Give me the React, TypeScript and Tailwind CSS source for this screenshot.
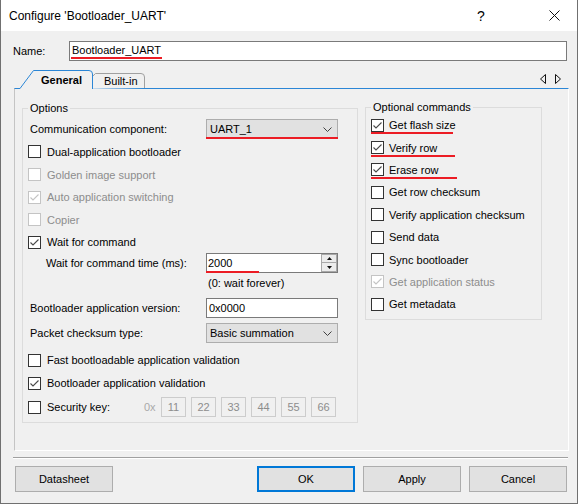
import React from "react";

type CheckProps = { checked?: boolean; disabled?: boolean };

function CheckBox({ checked = false, disabled = false }: CheckProps) {
  return (
    <span
      className={`w-[13px] h-[13px] shrink-0 border bg-white flex items-center justify-center ${
        disabled ? "border-[#c4c4c4]" : "border-[#333333]"
      }`}
    >
      {checked && (
        <svg width="11" height="11" viewBox="0 0 11 11" className="block">
          <polyline
            points="1.5,5.5 4,8 9.5,2.5"
            fill="none"
            stroke={disabled ? "#c4c4c4" : "#4a4a4a"}
            strokeWidth="1.1"
          />
        </svg>
      )}
    </span>
  );
}

type RowProps = {
  label: string;
  checked?: boolean;
  disabled?: boolean;
  className?: string;
  underline?: number;
};

function CheckRow({ label, checked = false, disabled = false, className = "", underline }: RowProps) {
  return (
    <div className={`relative flex items-center ${className}`}>
      <CheckBox checked={checked} disabled={disabled} />
      <span className={disabled ? "text-[#8d8d8d]" : "text-black"}>{label}</span>
      {underline ? (
        <span
          className="absolute left-0 top-[calc(50%+7px)] h-[2px] bg-[#ec1c24]"
          style={{ width: underline }}
        />
      ) : null}
    </div>
  );
}

function Chevron() {
  return (
    <svg width="9" height="5" viewBox="0 0 9 5" className="block">
      <polyline points="0.5,0.5 4.5,4.5 8.5,0.5" fill="none" stroke="#404040" strokeWidth="1" />
    </svg>
  );
}

function Combo({ text, underline = false }: { text: string; underline?: boolean }) {
  return (
    <div className="relative w-[132px] h-[20px] bg-[#e1e1e1] border border-[#adadad] flex items-center pl-[3px] pr-[5px]">
      <span className="flex-1">{text}</span>
      <Chevron />
      {underline && (
        <span className="absolute left-[-1px] right-[-1px] bottom-[-1px] h-[2px] bg-[#ec1c24]" />
      )}
    </div>
  );
}

function Spin() {
  return (
    <div className="relative w-[132px] h-[20px] bg-white border border-[#7a7a7a] flex items-stretch">
      <span className="flex-1 flex items-center pl-[1px]">2000</span>
      <div className="w-[16px] flex flex-col">
        <div className="h-[9px] bg-[#ececec] border border-[#a8a8a8] flex items-center justify-center">
          <svg width="5" height="3" viewBox="0 0 5 3" className="block">
            <polygon points="0,3 2.5,0 5,3" fill="#111" />
          </svg>
        </div>
        <div className="h-[9px] bg-[#ececec] border border-[#a8a8a8] border-t-0 flex items-center justify-center">
          <svg width="5" height="3" viewBox="0 0 5 3" className="block">
            <polygon points="0,0 2.5,3 5,0" fill="#111" />
          </svg>
        </div>
      </div>
      <span className="absolute left-[-1px] bottom-[-1px] w-[53px] h-[2px] bg-[#ec1c24]" />
    </div>
  );
}

function Btn({ children, ok = false }: { children: React.ReactNode; ok?: boolean }) {
  return (
    <div
      className={`w-[98px] h-[26px] bg-[#e1e1e1] flex items-center justify-center ${
        ok ? "border-2 border-[#0078d7]" : "border border-[#adadad]"
      }`}
    >
      {children}
    </div>
  );
}

export default function App() {
  const keys = ["11", "22", "33", "44", "55", "66"];
  return (
    <div className="w-[578px] h-[504px] bg-[#f0f0f0] border-x border-b border-[#707070] flex flex-col text-[11px] leading-[14px] text-black [font-family:'Liberation_Sans',Arial,sans-serif] overflow-hidden">
      {/* Title bar */}
      <div className="h-[31px] bg-white flex items-center shrink-0">
        <span className="pl-[8px] text-[12px]">Configure 'Bootloader_UART'</span>
        <div className="ml-auto flex h-full">
          <div className="w-[46px] flex items-center justify-center text-[14px]">?</div>
          <div className="w-[27px]" />
          <div className="w-[46px] flex items-center justify-center">
            <svg width="11" height="11" viewBox="0 0 11 11" className="block">
              <line x1="0.5" y1="0.5" x2="10.5" y2="10.5" stroke="#111" strokeWidth="1" />
              <line x1="10.5" y1="0.5" x2="0.5" y2="10.5" stroke="#111" strokeWidth="1" />
            </svg>
          </div>
        </div>
      </div>

      {/* Name row */}
      <div className="mt-[10px] h-[20px] flex items-center shrink-0">
        <span className="pl-[12px] w-[68px]">Name:</span>
        <div className="w-[498px] h-[20px] bg-white border border-[#7a7a7a] flex items-center pl-[1px]">
          <span className="leading-[13px] pt-[1px] border-b-2 border-[#ec1c24] px-[1px]">Bootloader_UART</span>
        </div>
      </div>

      {/* Tab strip */}
      <div className="relative mt-[9px] h-[18px] flex items-center shrink-0">
        <svg className="absolute left-[13px] top-0 z-10" width="140" height="19" viewBox="0 0 140 19">
          <path d="M66 19 L66 18.5 L81.5 3.5 L127 3.5 Q130.5 3.5 130.5 7 L130.5 18 Z" fill="#f0f0f0" />
          <path d="M66 18.5 L81.5 3.5 L127 3.5 Q130.5 3.5 130.5 7 L130.5 18" fill="none" stroke="#a0a0a0" strokeWidth="1" />
          <path d="M6 19 L6 18.5 L19.5 0.5 L75 0.5 Q78.5 0.5 78.5 4 L78.5 19 Z" fill="#f0f0f0" />
          <path d="M6 18.5 L19.5 0.5 L75 0.5 Q78.5 0.5 78.5 4 L78.5 19" fill="none" stroke="#2b86d6" strokeWidth="1" />
        </svg>
        <span className="relative z-20 ml-[40px] font-bold pt-[2px]">General</span>
        <span className="relative z-20 ml-[22px] pt-[4px]">Built-in</span>
        <div className="ml-auto mr-[16px] flex gap-[9px] pb-[1px]">
          <svg width="6" height="10" viewBox="0 0 6 10" className="block">
            <polygon points="5.5,0.5 5.5,9.5 0.5,5" fill="none" stroke="#111" strokeWidth="1" />
          </svg>
          <svg width="6" height="10" viewBox="0 0 6 10" className="block">
            <polygon points="0.5,0.5 0.5,9.5 5.5,5" fill="none" stroke="#111" strokeWidth="1" />
          </svg>
        </div>
      </div>

      {/* Panel */}
      <div className="ml-[13px] w-[555px] h-[363px] shrink-0 border-t border-t-[#2b86d6] border-l border-l-[#c4c4c4] border-r border-r-white border-b border-b-white flex items-start">
        {/* Options */}
        <fieldset className="ml-[7px] mt-[12px] w-[336px] border border-[#dcdcdc] pl-[5px] pb-[5px]">
          <legend className="px-[2px] leading-[14px]">Options</legend>
          <div className="flex flex-col">
            <div className="mt-[4px] h-[20px] flex items-center">
              <span className="w-[178px] pl-[2px]">Communication component:</span>
              <Combo text="UART_1" underline />
            </div>
            <div className="mt-[1px] flex flex-col">
              <CheckRow className="h-[23px] gap-[6px]" label="Dual-application bootloader" />
              <CheckRow className="h-[23px] gap-[6px]" label="Golden image support" disabled />
              <CheckRow className="h-[22px] gap-[6px]" label="Auto application switching" disabled checked />
              <CheckRow className="h-[23px] gap-[6px]" label="Copier" disabled />
              <CheckRow className="h-[22px] gap-[6px]" label="Wait for command" checked />
            </div>
            <div className="h-[20px] flex items-center">
              <span className="w-[178px] pl-[18px]">Wait for command time (ms):</span>
              <Spin />
            </div>
            <div className="h-[20px] flex items-center pl-[180px]">(0: wait forever)</div>
            <div className="mt-[5px] h-[20px] flex items-center">
              <span className="w-[178px] pl-[2px]">Bootloader application version:</span>
              <div className="w-[132px] h-[20px] bg-white border border-[#7a7a7a] flex items-center pl-[2px]">0x0000</div>
            </div>
            <div className="mt-[5px] h-[20px] flex items-center">
              <span className="w-[178px] pl-[2px]">Packet checksum type:</span>
              <Combo text="Basic summation" />
            </div>
            <CheckRow className="mt-[6px] h-[22px] gap-[6px]" label="Fast bootloadable application validation" />
            <CheckRow className="mt-[1px] h-[22px] gap-[6px]" label="Bootloader application validation" checked />
            <div className="mt-[3px] h-[20px] flex items-center">
              <div className="w-[116px] flex items-center gap-[6px]">
                <CheckBox />
                <span>Security key:</span>
              </div>
              <span className="w-[17px] text-[#a9a9a9]">0x</span>
              <div className="flex gap-[5px]">
                {keys.map((k) => (
                  <div
                    key={k}
                    className="w-[25px] h-[20px] border border-[#cccccc] flex items-center justify-center text-[#8d8d8d]"
                  >
                    {k}
                  </div>
                ))}
              </div>
            </div>
          </div>
        </fieldset>

        {/* Optional commands */}
        <fieldset className="ml-[7px] mt-[11px] w-[177px] border border-[#dcdcdc] pl-[5px] pb-[3px]">
          <legend className="px-[2px] leading-[14px]">Optional commands</legend>
          <div className="flex flex-col">
            <CheckRow className="h-[22.4px] gap-[5px]" label="Get flash size" checked underline={82} />
            <CheckRow className="h-[22.4px] gap-[5px]" label="Verify row" checked underline={84} />
            <CheckRow className="h-[22.4px] gap-[5px]" label="Erase row" checked underline={86} />
            <CheckRow className="h-[22.4px] gap-[5px]" label="Get row checksum" />
            <CheckRow className="h-[22.4px] gap-[5px]" label="Verify application checksum" />
            <CheckRow className="h-[22.4px] gap-[5px]" label="Send data" />
            <CheckRow className="h-[22.4px] gap-[5px]" label="Sync bootloader" />
            <CheckRow className="h-[22.4px] gap-[5px]" label="Get application status" checked disabled />
            <CheckRow className="h-[22.4px] gap-[5px]" label="Get metadata" />
          </div>
        </fieldset>
      </div>

      {/* Separator */}
      <div className="ml-[12px] mt-[6px] w-[555px] h-[2px] shrink-0 border-t border-t-[#a0a0a0] border-b border-b-white" />

      {/* Buttons */}
      <div className="mt-[7px] flex pl-[14px] pr-[10px] shrink-0">
        <Btn>Datasheet</Btn>
        <div className="ml-auto flex gap-[8px]">
          <Btn ok>OK</Btn>
          <Btn>Apply</Btn>
          <Btn>Cancel</Btn>
        </div>
      </div>
    </div>
  );
}
